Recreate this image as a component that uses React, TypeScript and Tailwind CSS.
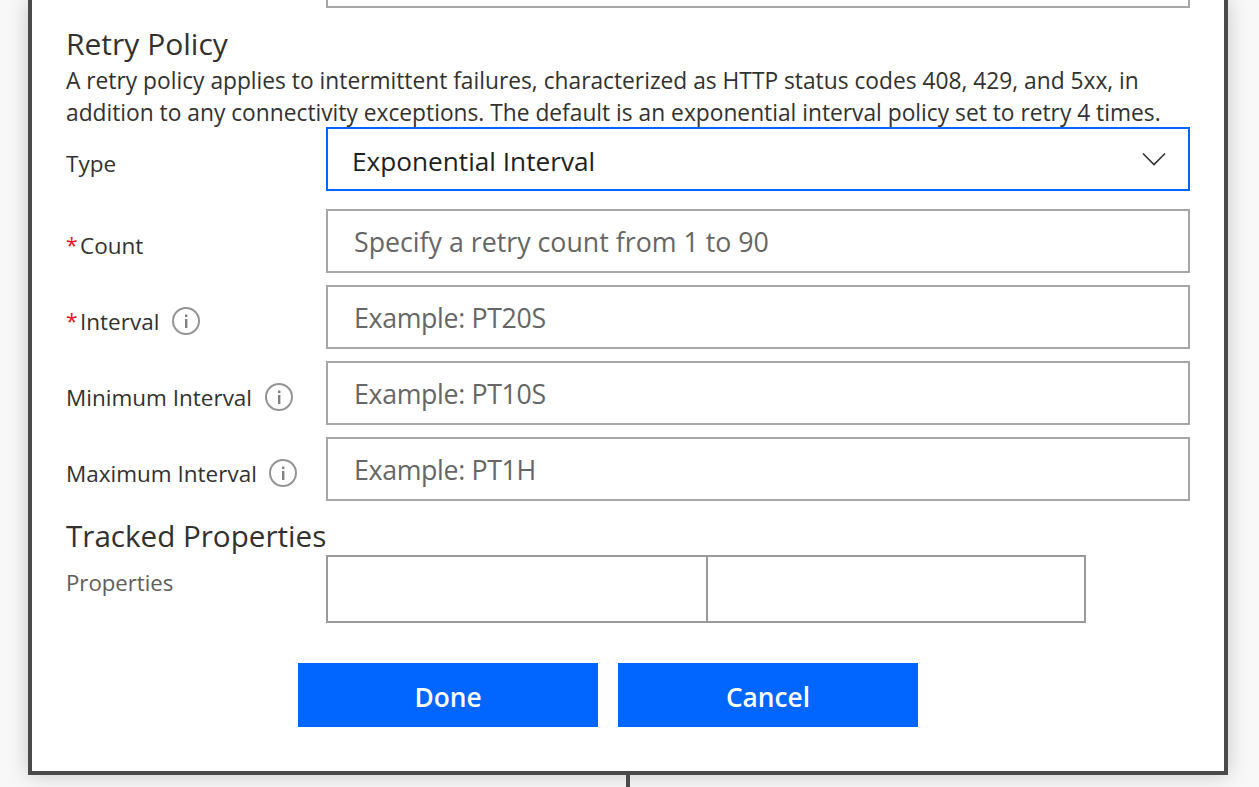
import React from "react";

function Info() {
  return (
    <svg width="28" height="28" viewBox="0 0 28 28" className="shrink-0" fill="none">
      <circle cx="14" cy="14" r="13" stroke="#949494" strokeWidth="2" />
      <rect x="13" y="12" width="2.4" height="9" fill="#808080" />
      <rect x="13" y="7.5" width="2.4" height="2.6" fill="#808080" />
    </svg>
  );
}

function Row({ label, required, info, placeholder, tight }: { label: string; required?: boolean; info?: boolean; placeholder: string; tight?: boolean }) {
  return (
    <div className="flex h-16">
      <div className="w-[260px] shrink-0 flex items-center pt-[10px] text-[22.5px] text-[#323130]">
        {required && <span className="text-[#e81123] mr-[4px] w-[10px] text-[21px]">*</span>}
        <span>{label}</span>
        {info && <span className="ml-[12.5px] -mt-[2px] flex"><Info /></span>}
      </div>
      <div className={`w-[864px] shrink-0 h-16 border-2 border-[#a6a6a6] flex items-center pl-[26px] pt-[2px] text-[26.75px] text-[#666666] ${tight ? "tracking-[-0.35px]" : ""}`}>
        {placeholder}
      </div>
    </div>
  );
}

export default function App() {
  return (
    <div className="h-[787px] w-[1259px] overflow-hidden bg-[#f8f8f8] flex flex-col items-start font-['Open_Sans','Noto_Sans',sans-serif]">
      <div className="ml-[28px] w-[1200px] h-[775px] shrink-0 bg-white border-x-4 border-b-4 border-[#4a4a4a] shadow-[0_0_20px_rgba(0,0,0,0.2)] pl-[34px] flex flex-col">
        <div className="ml-[260px] w-[864px] h-[8px] shrink-0 border-x-2 border-b-2 border-[#a6a6a6]" />
        <h2 className="mt-[17px] h-[38px] leading-[38px] text-[30px] text-[#323130] font-normal">Retry Policy</h2>
        <p className="mt-[2px] h-[62px] w-[1130px] text-[22.75px] leading-[32px] text-[#323130]">
          A retry policy applies to intermittent failures, characterized as HTTP status codes 408, 429, and 5xx, in addition to any connectivity exceptions. The default is an exponential interval policy set to retry 4 times.
        </p>
        <div className="flex h-16">
          <div className="w-[260px] shrink-0 flex items-center pt-[10px] text-[22.5px] text-[#323130]">Type</div>
          <div className="w-[864px] shrink-0 h-16 border-2 border-[#0066ff] flex items-center justify-between pl-[24px] pr-[22px] pt-[6px] text-[26.2px] text-[#201f1e]">
            <span>Exponential Interval</span>
            <svg width="24" height="14" viewBox="0 0 24 14" fill="none" className="-mt-[6px]">
              <path d="M1 1.5 L12 12.5 L23 1.5" stroke="#323130" strokeWidth="1.6" />
            </svg>
          </div>
        </div>
        <div className="mt-[18px] flex flex-col gap-3">
          <Row label="Count" required placeholder="Specify a retry count from 1 to 90" />
          <Row label="Interval" required info tight placeholder="Example: PT20S" />
          <Row label="Minimum Interval" info tight placeholder="Example: PT10S" />
          <Row label="Maximum Interval" info tight placeholder="Example: PT1H" />
        </div>
        <h2 className="mt-[16px] h-[38px] leading-[38px] text-[29.6px] text-[#323130] font-normal">Tracked Properties</h2>
        <div className="flex">
          <div className="w-[260px] shrink-0 pt-[12px] text-[22.2px] leading-[32px] text-[#605e5c]">Properties</div>
          <div className="w-[760px] h-[68px] border-2 border-[#999999] flex">
            <div className="w-[380px] border-r-2 border-[#999999]" />
            <div className="flex-1" />
          </div>
        </div>
        <div className="mt-[40px] ml-[232px] flex gap-5">
          <div className="w-[300px] h-16 bg-[#0066ff] flex items-center justify-center pt-[6px] text-white text-[26.3px] font-semibold">Done</div>
          <div className="w-[300px] h-16 bg-[#0066ff] flex items-center justify-center pt-[6px] text-white text-[26.3px] font-semibold">Cancel</div>
        </div>
      </div>
      <div className="ml-[626px] w-1 flex-1 bg-[#4a4a4a]" />
    </div>
  );
}
